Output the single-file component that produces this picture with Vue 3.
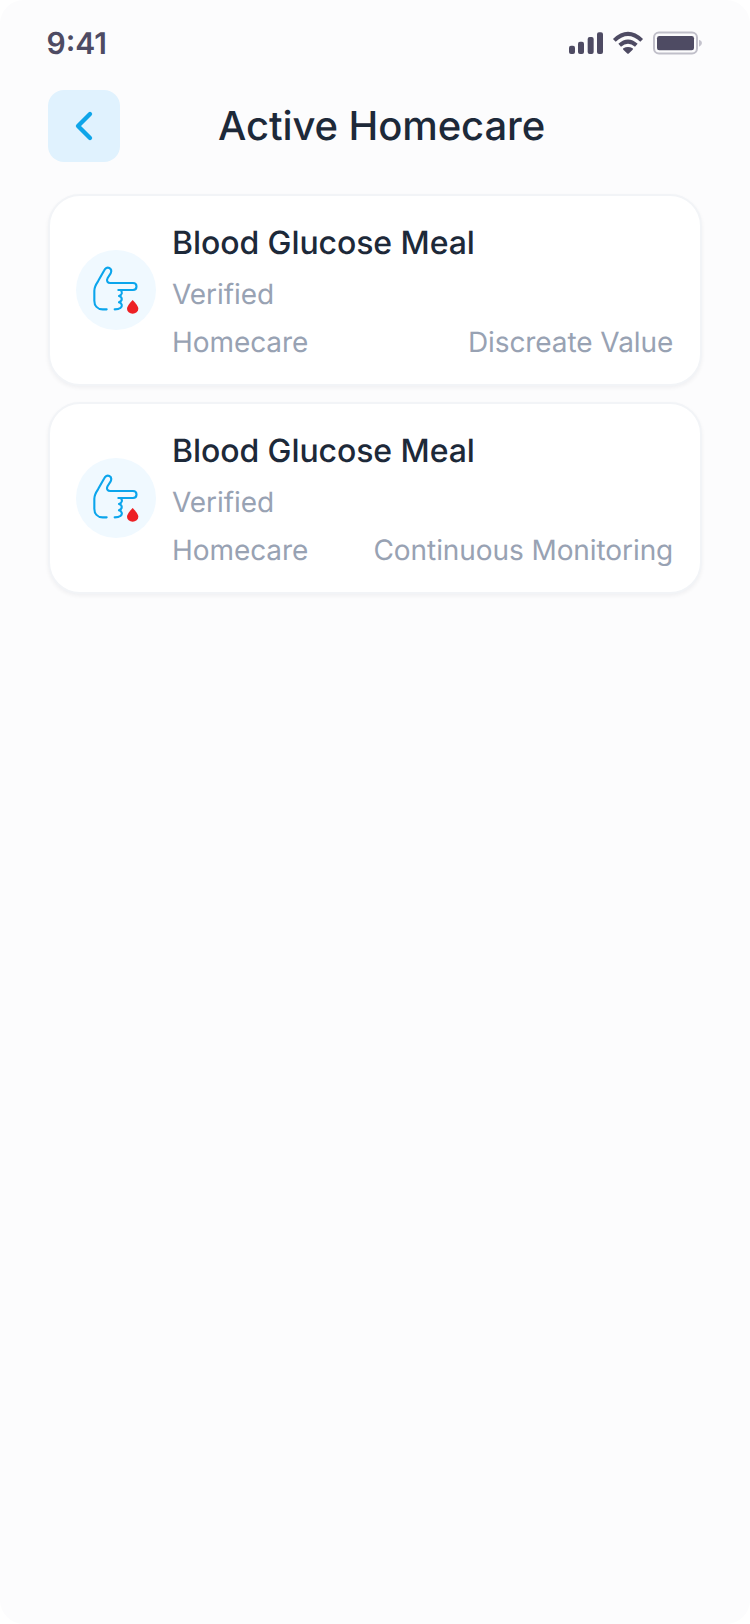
<script setup>
const records = [
  { id: 1, title: 'Blood Glucose Meal', status: 'Verified', source: 'Homecare', mode: 'Discreate Value' },
  { id: 2, title: 'Blood Glucose Meal', status: 'Verified', source: 'Homecare', mode: 'Continuous Monitoring' },
]
</script>

<template>
  <main class="screen">
    <div class="status-bar">
      <span class="time">9:41</span>
      <svg class="indicators" viewBox="54 63 402 72" aria-hidden="true">
        <g fill="#4e4b63">
          <rect x="57" y="107" width="18" height="25" rx="6" />
          <rect x="84" y="95" width="18" height="37" rx="6" />
          <rect x="113" y="81" width="18" height="51" rx="6" />
          <rect x="141" y="67" width="18" height="65" rx="6" />
          <path d="M220 115Q234 107 248 115Q250 117 248 119L237 130Q234 133 231 130L220 119Q218 117 220 115Z" />
          <rect x="321" y="78" width="111" height="43" rx="7" />
        </g>
        <g fill="none" stroke="#4e4b63" stroke-width="12">
          <path d="M193 91Q234 52 275 91" />
          <path d="M209 106Q234 84 259 106" />
        </g>
        <rect x="312" y="67.500" width="129" height="63" rx="15" fill="none" stroke="#c0bfc9" stroke-width="6" />
        <path d="M447 89Q456 92 456 99Q456 106 447 110Z" fill="#c4c3cd" />
      </svg>
    </div>

    <header class="header">
      <button class="back" aria-label="Back">
        <svg viewBox="0 0 72 72"><path d="M42 24 30 36 42 48" /></svg>
      </button>
      <h1>Active Homecare</h1>
    </header>

    <section class="list">
      <article v-for="record in records" :key="record.id" class="card">
        <div class="badge">
          <svg viewBox="18 30 240 240" aria-hidden="true">
            <path class="hand" d="M110 208H98C82 208 73 197 73 182V152C73 141 78 133 84 124L102 92C106 84 112 81 118 84C124 87 125 93 122 100L113 114C108 123 113 129 121 129H189C203 129 203 150 189 150H145" />
            <path class="hand" d="M152 150C158 156 157 165 147 168C158 171 158 183 147 187C157 190 158 200 151 204C146 208 141 208 134 208" />
            <path class="drop" d="M188 180C186 182 171 197 171 206A17 15 0 0 0 205 206C205 197 190 182 188 180Z" />
          </svg>
        </div>
        <div class="details">
          <h2>{{ record.title }}</h2>
          <p>{{ record.status }}</p>
          <div class="row">
            <p>{{ record.source }}</p>
            <p>{{ record.mode }}</p>
          </div>
        </div>
      </article>
    </section>
  </main>
</template>

<style>
body {
  background: #fff;
}
</style>

<style scoped>
.screen {
  box-sizing: border-box;
  width: 750px;
  height: 1624px;
  padding: 0 48px;
  border-radius: 24px;
  background: #fcfcfd;
  font-family: Inter, 'Liberation Sans', sans-serif;
  text-rendering: geometricPrecision;
  color: #1d2939;
}

h1,
h2,
p {
  margin: 0;
}

.status-bar {
  display: flex;
  align-items: center;
  justify-content: space-between;
  height: 86px;
  margin-left: -1.5px;
}

.time {
  padding-top: 2px;
  font-size: 30px;
  font-weight: 600;
  line-height: 36px;
  color: #4e4b63;
}

.indicators {
  width: 134px;
  height: 24px;
}

.header {
  display: flex;
  align-items: center;
  height: 72px;
  margin-top: 4px;
}

.back {
  width: 72px;
  height: 72px;
  padding: 0;
  border: 0;
  border-radius: 16px;
  background: #e0f2fe;
}

.back svg {
  display: block;
  fill: none;
  stroke: #0ea5e9;
  stroke-width: 4.3;
  stroke-linecap: round;
  stroke-linejoin: round;
}

h1 {
  margin-left: 98px;
  font-size: 40px;
  font-weight: 500;
  line-height: 48px;
  letter-spacing: -0.1px;
  white-space: nowrap;
}

.list {
  display: flex;
  flex-direction: column;
  gap: 16px;
  margin-top: 32px;
}

.card {
  box-sizing: border-box;
  display: flex;
  align-items: center;
  gap: 16px;
  height: 192px;
  padding: 26px;
  border: 2px solid #f2f4f7;
  border-radius: 32px;
  background: #fff;
  box-shadow: 0 2px 4px rgba(16, 24, 40, 0.05);
}

.badge {
  flex: none;
  width: 80px;
  height: 80px;
  border-radius: 50%;
  background: #f0f9ff;
}

.badge svg {
  display: block;
}

.hand {
  fill: none;
  stroke: #0ba5ec;
  stroke-width: 6.3;
  stroke-linecap: round;
  stroke-linejoin: round;
}

.drop {
  fill: #ed2024;
}

.details {
  display: flex;
  flex: 1;
  flex-direction: column;
  gap: 16px;
}

h2 {
  padding-top: 1px;
  font-size: 32px;
  font-weight: 500;
  line-height: 39px;
  letter-spacing: -0.08px;
}

p {
  font-size: 28px;
  font-weight: 400;
  line-height: 32px;
  letter-spacing: -0.08px;
  color: #98a2b3;
  white-space: nowrap;
}

.row {
  display: flex;
  justify-content: space-between;
  padding-right: 0.8px;
}
</style>
